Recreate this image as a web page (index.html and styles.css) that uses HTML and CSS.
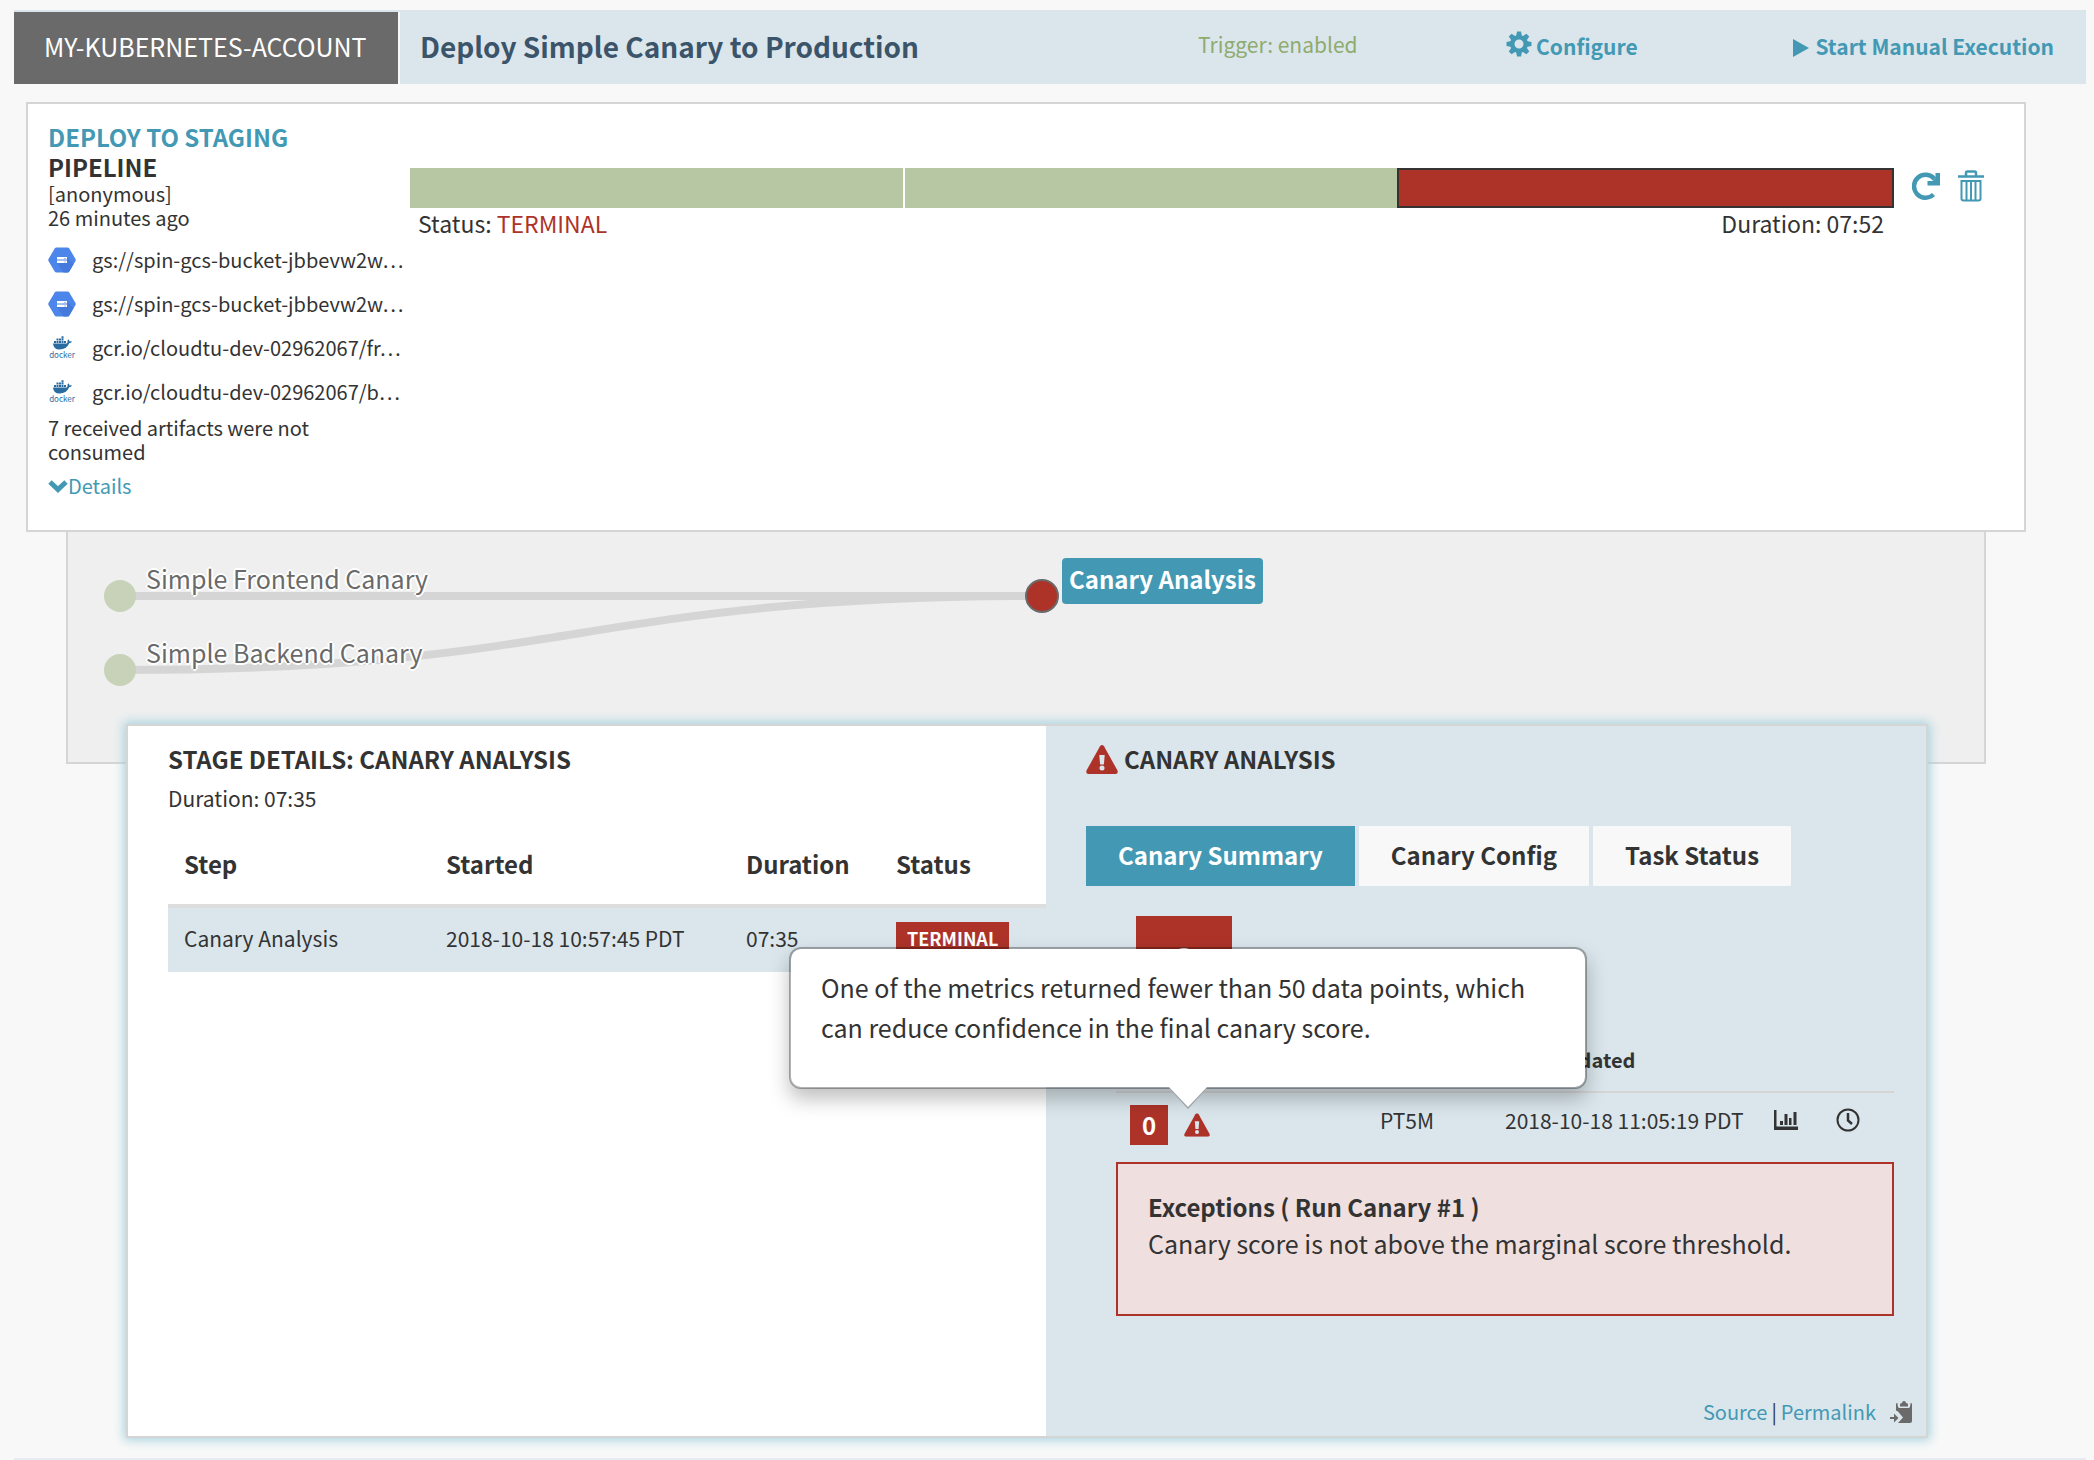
FILE: index.html
```
<!DOCTYPE html>
<html lang="en">

<head>
    <meta charset="utf-8">
    <meta name="viewport" content="width=device-width, initial-scale=1.0">
    <title>Deploy Simple Canary to Production</title>
    <link rel="stylesheet" href="styles.css">
</head>

<body>

    <!-- shared icons -->
    <svg class="sprite" width="0" height="0" aria-hidden="true">
        <symbol id="warning" viewBox="0 0 32 29">
            <path fill="#ad3329" d="M14 1.2Q16-1 18 1.2L31.5 25.500Q32.500 28.800 29.500 29H2.500Q-.5 28.800.5 25.500Z" />
            <path fill="#dae6ec" d="M13.300 10h5.400l-.8 9.500h-3.800z" />
            <circle fill="#dae6ec" cx="16" cy="23" r="2.500" />
        </symbol>
        <symbol id="gcs" viewBox="0 0 28 26">
            <path fill="#4d86ea" d="M8.500.5h11q1.200 0 1.800 1L27.500 12q.5 1 0 2l-6.200 10.500q-.6 1-1.800 1h-11q-1.200 0-1.800-1L.5 14q-.5-1 0-2L6.700 1.500q.6-1 1.800-1z" />
            <path fill="#4579dc" d="M19 10l6.500 7-4.200 7.500q-.6 1-1.800 1H15.500L9 16z" />
            <path fill="#fff" d="M9 10h10v2.500H9zM9 13.500h10V16H9z" />
            <path fill="#a9c4f5" d="M16 11h2v1h-2zM16 14.500h2v1h-2z" />
        </symbol>
        <symbol id="docker" viewBox="0 0 28 26">
            <path fill="#2a6ba0" d="M5 8.500h13.500q1.200-.3 1-1.800-.2-1.500.7-2.500 1.300 1 1.300 2.200 1.300-.4 2.500.2-.7 1.600-2.800 1.700Q18.500 14.500 11.500 14.500 5.500 14.500 5 8.500z" />
            <path fill="#2a6ba0" d="M6 6h2v2H6zM8.500 6h2v2h-2zM11 6h2v2h-2zM13.500 6h2v2h-2zM16 6h2v2h-2zM8.500 3.600h2v2h-2zM11 3.600h2v2h-2zM13.500 3.600h2v2h-2zM13.500 1.200h2v2h-2z" />
        </symbol>
    </svg>

    <header class="group-heading">
        <span class="account">MY-KUBERNETES-ACCOUNT</span>
        <div class="heading-bar">
            <h1>Deploy Simple Canary to Production</h1>
            <span class="trigger">Trigger: enabled</span>
            <button class="link-button configure">
                <svg width="26" height="26" viewBox="0 0 26 26">
                    <g fill="#4399b4">
                        <path fill-rule="evenodd" d="M13 4a9 9 0 1 1 0 18 9 9 0 0 1 0-18zm0 4.500a4.500 4.500 0 1 0 0 9 4.500 4.500 0 0 0 0-9z" />
                        <path d="M11 .5h4l1 5h-6z" />
                        <path d="M11 .5h4l1 5h-6z" transform="rotate(45 13 13)" />
                        <path d="M11 .5h4l1 5h-6z" transform="rotate(90 13 13)" />
                        <path d="M11 .5h4l1 5h-6z" transform="rotate(135 13 13)" />
                        <path d="M11 .5h4l1 5h-6z" transform="rotate(180 13 13)" />
                        <path d="M11 .5h4l1 5h-6z" transform="rotate(225 13 13)" />
                        <path d="M11 .5h4l1 5h-6z" transform="rotate(270 13 13)" />
                        <path d="M11 .5h4l1 5h-6z" transform="rotate(315 13 13)" />
                    </g>
                </svg>
                Configure
            </button>
            <button class="link-button start">
                <svg width="16" height="18" viewBox="0 0 16 18">
                    <path fill="#4399b4" d="M0 0l16 9L0 18z" />
                </svg>
                Start Manual Execution
            </button>
        </div>
    </header>

    <main>
        <section class="execution">
            <div class="execution-info">
                <h2><a href="#">DEPLOY TO STAGING</a></h2>
                <h2>PIPELINE</h2>
                <p>[anonymous]</p>
                <p>26 minutes ago</p>
                <ul>
                    <li><svg width="28" height="26"><use href="#gcs" /></svg>gs://spin-gcs-bucket-jbbevw2w…</li>
                    <li><svg width="28" height="26"><use href="#gcs" /></svg>gs://spin-gcs-bucket-jbbevw2w…</li>
                    <li>
                        <svg width="28" height="26"><use href="#docker" /><text class="docker-text" x="14" y="23" text-anchor="middle">docker</text></svg>
                        gcr.io/cloudtu-dev-02962067/fr…
                    </li>
                    <li>
                        <svg width="28" height="26"><use href="#docker" /><text class="docker-text" x="14" y="23" text-anchor="middle">docker</text></svg>
                        gcr.io/cloudtu-dev-02962067/b…
                    </li>
                </ul>
                <p class="unused">7 received artifacts were not consumed</p>
                <button class="details">
                    <svg width="20" height="14" viewBox="0 0 20 14">
                        <path fill="none" stroke="#4399b4" stroke-width="5" d="M2 3l8 7.500L18 3" />
                    </svg>Details
                </button>
            </div>

            <div class="execution-bar">
                <div class="stages">
                    <span class="stage"></span>
                    <span class="stage"></span>
                    <span class="stage terminal"></span>
                </div>
                <div class="bar-text">
                    <span>Status: <span class="red">TERMINAL</span></span>
                    <span>Duration: 07:52</span>
                </div>
            </div>

            <div class="actions">
                <button aria-label="Restart">
                    <svg width="28" height="30" viewBox="0 0 28 30">
                        <path fill="none" stroke="#4399b4" stroke-width="4.500" d="M21.500 24.500A11.500 11.500 0 1 1 22.500 9" />
                        <path fill="#4399b4" d="M23.500 3H28v12.500H15.500V11h5l3-3z" />
                    </svg>
                </button>
                <button aria-label="Delete">
                    <svg width="26" height="32" viewBox="0 0 26 32">
                        <g fill="none" stroke="#4399b4" stroke-width="2">
                            <path stroke-width="2.500" d="M0 6.500h26M8 6.500V3q0-1.500 1.500-1.500h7q1.500 0 1.500 1.500v3.500" />
                            <path d="M3.500 11h19v17.500q0 2-2 2h-15q-2 0-2-2zM8.500 11v19M13 11v19M17.500 11v19" />
                        </g>
                    </svg>
                </button>
            </div>
        </section>

        <section class="graph">
            <svg class="links" width="1100" height="190" viewBox="0 0 1100 190">
                <g fill="none" stroke="#d5d5d5" stroke-width="8">
                    <path d="M52 62H974" />
                    <path d="M52 136C513 136 513 62 974 62" />
                </g>
                <g fill="#c8d2b8">
                    <circle cx="52" cy="62" r="16" />
                    <circle cx="52" cy="136" r="16" />
                </g>
                <circle cx="974" cy="62" r="16" fill="#ad3329" stroke="#6a6a6a" stroke-width="2" />
            </svg>
            <a href="#" class="node frontend">Simple Frontend Canary</a>
            <a href="#" class="node backend">Simple Backend Canary</a>
            <a href="#" class="node active">Canary Analysis</a>
        </section>

        <section class="stage-details">
            <div class="steps">
                <h2>STAGE DETAILS: CANARY ANALYSIS</h2>
                <p>Duration: 07:35</p>
                <table>
                    <thead>
                        <tr>
                            <th class="col-step">Step</th>
                            <th class="col-started">Started</th>
                            <th class="col-duration">Duration</th>
                            <th>Status</th>
                        </tr>
                    </thead>
                    <tbody>
                        <tr>
                            <td>Canary Analysis</td>
                            <td>2018-10-18 10:57:45 PDT</td>
                            <td>07:35</td>
                            <td><span class="label">TERMINAL</span></td>
                        </tr>
                    </tbody>
                </table>
            </div>

            <div class="summary">
                <h2><svg width="32" height="29"><use href="#warning" /></svg>CANARY ANALYSIS</h2>
                <nav class="tabs">
                    <button class="tab selected">Canary Summary</button>
                    <button class="tab">Canary Config</button>
                    <button class="tab">Task Status</button>
                </nav>

                <div class="score">0</div>

                <table class="runs">
                    <thead>
                        <tr>
                            <th class="col-result"></th>
                            <th class="col-interval"></th>
                            <th class="col-updated">Last Updated</th>
                            <th></th>
                        </tr>
                    </thead>
                    <tbody>
                        <tr>
                            <td>
                                <div class="result">
                                    <span class="small-score">0</span>
                                    <span class="hint">
                                        <svg width="26" height="24" viewBox="0 0 32 29"><use href="#warning" width="32" height="29" /></svg>
                                        <span class="popover" role="tooltip">One of the metrics returned fewer than 50 data points, which can reduce confidence in the final canary score.</span>
                                    </span>
                                </div>
                            </td>
                            <td>PT5M</td>
                            <td>2018-10-18 11:05:19 PDT</td>
                            <td>
                                <div class="run-links">
                                    <button aria-label="Report">
                                        <svg width="24" height="22" viewBox="0 0 24 22">
                                            <path fill="#333" d="M0 1h2.500v16.500H24V21H0zM6 12h3v4H6zM10.500 5h3v11h-3zM15 9h2.500v7H15zM19.500 3h3v13h-3z" />
                                        </svg>
                                    </button>
                                    <button aria-label="Time range">
                                        <svg width="24" height="24" viewBox="0 0 24 24">
                                            <g fill="none" stroke="#333" stroke-width="2">
                                                <circle cx="12" cy="12" r="10.500" />
                                                <path stroke-width="2.500" d="M12 5v7.500l4 3.500" />
                                            </g>
                                        </svg>
                                    </button>
                                </div>
                            </td>
                        </tr>
                    </tbody>
                </table>

                <div class="exceptions">
                    <h3>Exceptions ( Run Canary #1 )</h3>
                    <p>Canary score is not above the marginal score threshold.</p>
                </div>

                <div class="stage-links">
                    <a href="#">Source</a><span class="divider">|</span><a href="#">Permalink</a>
                    <button aria-label="Copy permalink">
                        <svg width="22" height="22" viewBox="0 0 22 22">
                            <path fill="#6a6a6a" d="M6 3q0-1 1.500-1 0 5 2 5h9q2 0 2-5Q22 2 22 3v17q0 2-2 2H8l5-5.500-5-6-2-1z" />
                            <path fill="#6a6a6a" d="M10 5.500V3.500Q10 2 12 2 12 0 14 0t2 2q2 0 2 1.500v2zM0 16h4v-3.500l4.500 4.500L4 21.500V18H0z" />
                        </svg>
                    </button>
                </div>
            </div>
        </section>
    </main>

    <hr>

</body></html>
```
FILE: styles.css
```
* {
    box-sizing: border-box;
}

body {
    margin: 0;
    padding: 10px 8px 0 14px;
    background-color: #f8f8f8;
    color: #333;
    font-family: "Noto Sans CJK KR", "Noto Sans", sans-serif;
    font-size: 21px;
    line-height: 24px;
}

h1,
h2,
h3,
p,
ul {
    margin: 0;
    padding: 0;
}

h2,
h3 {
    font-size: 24px;
    font-weight: 700;
    line-height: 30px;
}

a {
    color: #4399b4;
    text-decoration: none;
}

button {
    border: 0;
    padding: 0;
    background: none;
    color: #4399b4;
    font: inherit;
    cursor: pointer;
}

svg {
    display: block;
    flex: none;
}

.sprite {
    position: absolute;
}

.docker-text {
    fill: #2a6ba0;
    font-size: 8px;
}

.red {
    color: #ad3329;
}

/* heading */

.group-heading {
    display: flex;
    gap: 2px;
    height: 74px;
    border-top: 2px solid #dae6ec;
}

.account {
    width: 384px;
    padding-left: 30px;
    background-color: #6a6a6a;
    color: #fff;
    font-size: 25px;
    line-height: 68px;
}

.heading-bar {
    flex: 1;
    display: flex;
    align-items: center;
    padding: 0 32px 4px 20px;
    background-color: #dae6ec;
}

h1 {
    width: 778px;
    color: #3c5469;
    font-size: 28px;
    font-weight: 700;
    line-height: 34px;
}

.trigger {
    width: 308px;
    padding-bottom: 4px;
    color: #8fab6e;
}

.link-button {
    display: flex;
    align-items: center;
    gap: 4px;
    font-weight: 700;
}

.configure svg {
    margin-bottom: 4px;
}

.start {
    gap: 6px;
    margin-left: auto;
}

.start svg {
    margin-top: 4px;
}

/* execution */

.execution {
    display: flex;
    margin: 18px 60px 0 12px;
    padding: 18px 40px 32px 20px;
    border: 2px solid #d5d5d5;
    background-color: #fff;
}

.execution-info {
    width: 362px;
    font-size: 20px;
}

.execution-info ul {
    margin-top: 8px;
    list-style: none;
}

.execution-info li {
    display: flex;
    align-items: center;
    gap: 16px;
    height: 44px;
    white-space: nowrap;
}

.unused {
    max-width: 290px;
    margin-top: 2px;
}

.details {
    display: flex;
    align-items: center;
    margin-top: 10px;
}

.execution-bar {
    flex: 1;
    padding-top: 46px;
}

.stages {
    display: flex;
}

.stage {
    flex: 1;
    height: 40px;
    border-right: 2px solid #fff;
    background-color: #b8c7a3;
}

.stage:nth-child(2) {
    border-right: 0;
}

.stage.terminal {
    border: 2px solid #333;
    background-color: #ad3329;
}

.bar-text {
    display: flex;
    justify-content: space-between;
    padding: 3px 10px 0 8px;
    font-size: 23px;
}

.actions {
    display: flex;
    align-items: flex-start;
    gap: 18px;
    padding: 48px 0 0 18px;
}

/* graph */

.graph {
    position: relative;
    margin: 0 100px 0 52px;
    padding: 2px 0 38px;
    border: 2px solid #d5d5d5;
    border-top: 0;
    background-color: #efefef;
}

.node {
    position: absolute;
    left: 78px;
    color: #6a6a6a;
    font-size: 25px;
    line-height: 30px;
    text-shadow: 2px 0 #fff, -2px 0 #fff, 0 2px #fff, 0 -2px #fff, 1px 1px #fff, -1px -1px #fff;
}

.frontend {
    top: 31px;
}

.backend {
    top: 105px;
}

.node.active {
    left: 994px;
    top: 26px;
    padding: 0 7px 4px;
    border-radius: 4px;
    background-color: #4399b4;
    color: #fff;
    font-size: 24px;
    font-weight: 700;
    line-height: 42px;
    text-shadow: none;
}

/* stage details */

.stage-details {
    position: relative;
    display: grid;
    grid-template-columns: 918fr 880fr;
    min-height: 714px;
    margin: -40px 158px 0 112px;
    border: 2px solid #d5d5d5;
    background-color: #fff;
    box-shadow: 0 0 10px 2px #a5d2de;
}

.steps {
    padding: 18px 0 0 40px;
}

.steps p {
    margin-top: 12px;
}

table {
    width: 100%;
    border-collapse: collapse;
    table-layout: fixed;
}

th,
td {
    padding: 0;
    text-align: left;
}

.steps table {
    margin-top: 16px;
}

.steps th {
    height: 80px;
    padding: 0 0 2px 16px;
    border-bottom: 4px solid #ddd;
    font-size: 24px;
}

.steps td {
    height: 66px;
    padding: 0 0 4px 16px;
    background-color: #dae6ec;
}

.steps .col-step {
    width: 262px;
}

.steps .col-started {
    width: 300px;
}

.steps .col-duration {
    width: 150px;
}

.label {
    display: inline-block;
    padding: 0 11px;
    background-color: #ad3329;
    color: #fff;
    font-size: 18px;
    font-weight: 700;
    line-height: 32px;
}

.summary {
    display: flex;
    flex-direction: column;
    padding: 18px 32px 12px 40px;
    background-color: #dae6ec;
}

.summary h2 {
    display: flex;
    align-items: center;
    gap: 6px;
}

.tabs {
    display: flex;
    gap: 4px;
    margin-top: 52px;
}

.tab {
    padding: 0 32px 2px;
    background-color: #f8f8f8;
    color: #333;
    font-size: 24px;
    font-weight: 700;
    line-height: 58px;
}

.tab.selected {
    background-color: #4399b4;
    color: #fff;
}

.score {
    width: 96px;
    margin: 30px 0 0 50px;
    background-color: #ad3329;
    color: #fff;
    font-size: 44px;
    font-weight: 700;
    line-height: 92px;
    text-align: center;
}

.runs {
    width: 778px;
    margin: 24px 0 0 30px;
}

.runs th {
    height: 60px;
    padding-bottom: 4px;
    border-bottom: 2px solid #d5d5d5;
    font-size: 20px;
}

.runs td {
    height: 70px;
    padding-bottom: 16px;
}

.runs .col-result {
    width: 264px;
}

.runs .col-interval {
    width: 125px;
}

.runs .col-updated {
    width: 269px;
}

.result {
    display: flex;
    align-items: center;
    gap: 16px;
    padding: 10px 0 0 14px;
}

.small-score {
    width: 38px;
    background-color: #ad3329;
    color: #fff;
    font-size: 24px;
    font-weight: 700;
    line-height: 40px;
    text-align: center;
}

.hint {
    position: relative;
}

.popover {
    position: absolute;
    left: -395px;
    bottom: 48px;
    width: 798px;
    height: 142px;
    padding: 18px 30px;
    border: 2px solid rgba(0, 0, 0, 0.3);
    border-radius: 12px;
    background-color: #fff;
    background-clip: padding-box;
    box-shadow: 0 10px 20px rgba(0, 0, 0, 0.25);
    font-size: 25px;
    line-height: 40px;
}

.popover::before,
.popover::after {
    content: "";
    position: absolute;
    left: 377px;
    top: 100%;
    border: 20px solid transparent;
    border-top: 22px solid #9aa2a6;
    border-bottom: 0;
}

.popover::after {
    left: 378px;
    border-width: 20px 19px 0;
    border-top-color: #fff;
}

.run-links {
    display: flex;
    align-items: center;
    gap: 38px;
}

.exceptions {
    width: 778px;
    height: 154px;
    margin-left: 30px;
    padding: 25px 30px;
    border: 2px solid #ad3329;
    background-color: #efdfdf;
    font-size: 25px;
    line-height: 36px;
}

.exceptions h3 {
    line-height: 36px;
}

.stage-links {
    display: flex;
    align-items: center;
    justify-content: flex-end;
    margin: auto -18px 0 0;
    font-size: 20px;
}

.divider {
    margin: 0 4px;
}

.stage-links button {
    margin-left: 14px;
}

hr {
    height: 2px;
    margin: 20px 0 0;
    border: 0;
    background-color: #e6ecef;
}
```
